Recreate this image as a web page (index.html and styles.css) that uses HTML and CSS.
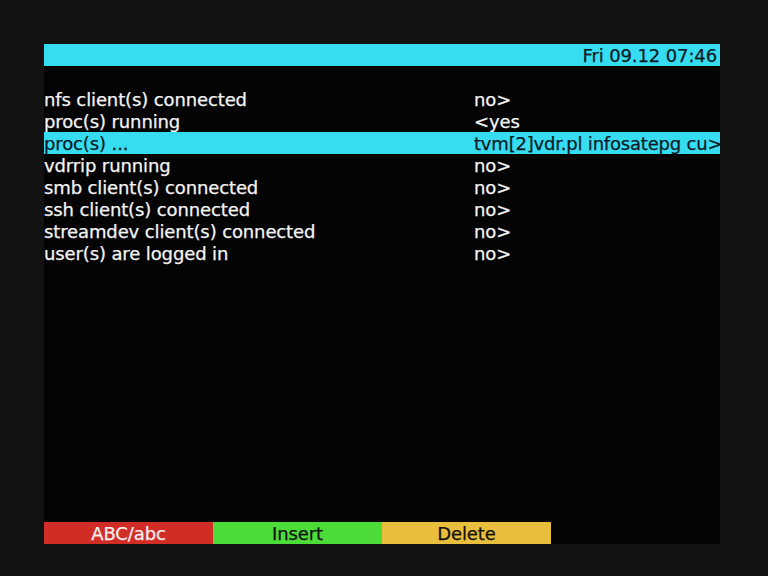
FILE: index.html
```html
<!DOCTYPE html>
<html>
<head>
<meta charset="utf-8">
<link rel="stylesheet" href="styles.css">
</head>
<body>
<div class="osd">
  <div class="title">Fri 09.12 07:46</div>
  <div class="list">
    <div class="row blank"></div>
    <div class="row"><span class="key">nfs client(s) connected</span><span class="val">no&gt;</span></div>
    <div class="row"><span class="key">proc(s) running</span><span class="val">&lt;yes</span></div>
    <div class="row current"><span class="key">proc(s) ...</span><span class="val tight">tvm[2]vdr.pl infosatepg cu&gt;</span></div>
    <div class="row"><span class="key">vdrrip running</span><span class="val">no&gt;</span></div>
    <div class="row"><span class="key">smb client(s) connected</span><span class="val">no&gt;</span></div>
    <div class="row"><span class="key">ssh client(s) connected</span><span class="val">no&gt;</span></div>
    <div class="row"><span class="key">streamdev client(s) connected</span><span class="val">no&gt;</span></div>
    <div class="row"><span class="key">user(s) are logged in</span><span class="val">no&gt;</span></div>
  </div>
  <div class="buttons">
    <div class="btn red">ABC/abc</div>
    <div class="btn green">Insert</div>
    <div class="btn yellow">Delete</div>
    <div class="btn blue"></div>
  </div>
</div>
</body>
</html>
```
FILE: styles.css
```css
html, body {
  margin: 0;
  padding: 0;
  background: #121212;
}
body {
  width: 768px;
  height: 576px;
  overflow: hidden;
  font-family: "DejaVu Sans", sans-serif;
  font-size: 18px;
  letter-spacing: -0.12px;
  -webkit-text-stroke: 0.25px currentColor;
}
.osd {
  margin: 44px 0 0 44px;
  width: 676px;
  height: 500px;
  background: #040404;
  display: flex;
  flex-direction: column;
}
.title {
  height: 21px;
  padding-top: 1px;
  line-height: 22px;
  background: #36dcf0;
  color: #0b1a24;
  text-align: right;
  padding-right: 3px;
}
.list {
  flex: 1;
  display: flex;
  flex-direction: column;
}
.row {
  height: 21px;
  padding-top: 1px;
  line-height: 21px;
  display: flex;
  color: #f4f4f4;
  white-space: nowrap;
}
.row.current {
  background: #36dcf0;
  color: #0b1a24;
}
.key {
  width: 430px;
  flex: none;
}
.val {
  flex: 1;
  min-width: 0;
}
.val.tight {
  letter-spacing: -0.2px;
}
.buttons {
  height: 22px;
  display: flex;
}
.btn {
  width: 169px;
  height: 21px;
  padding-top: 1px;
  line-height: 21px;
  text-align: center;
}
.red { background: #d22c26; color: #f4f0f0; }
.green { background: #4cdc38; color: #101010; }
.yellow { background: #e8be3c; color: #141008; }
.blue { background: transparent; }
```
